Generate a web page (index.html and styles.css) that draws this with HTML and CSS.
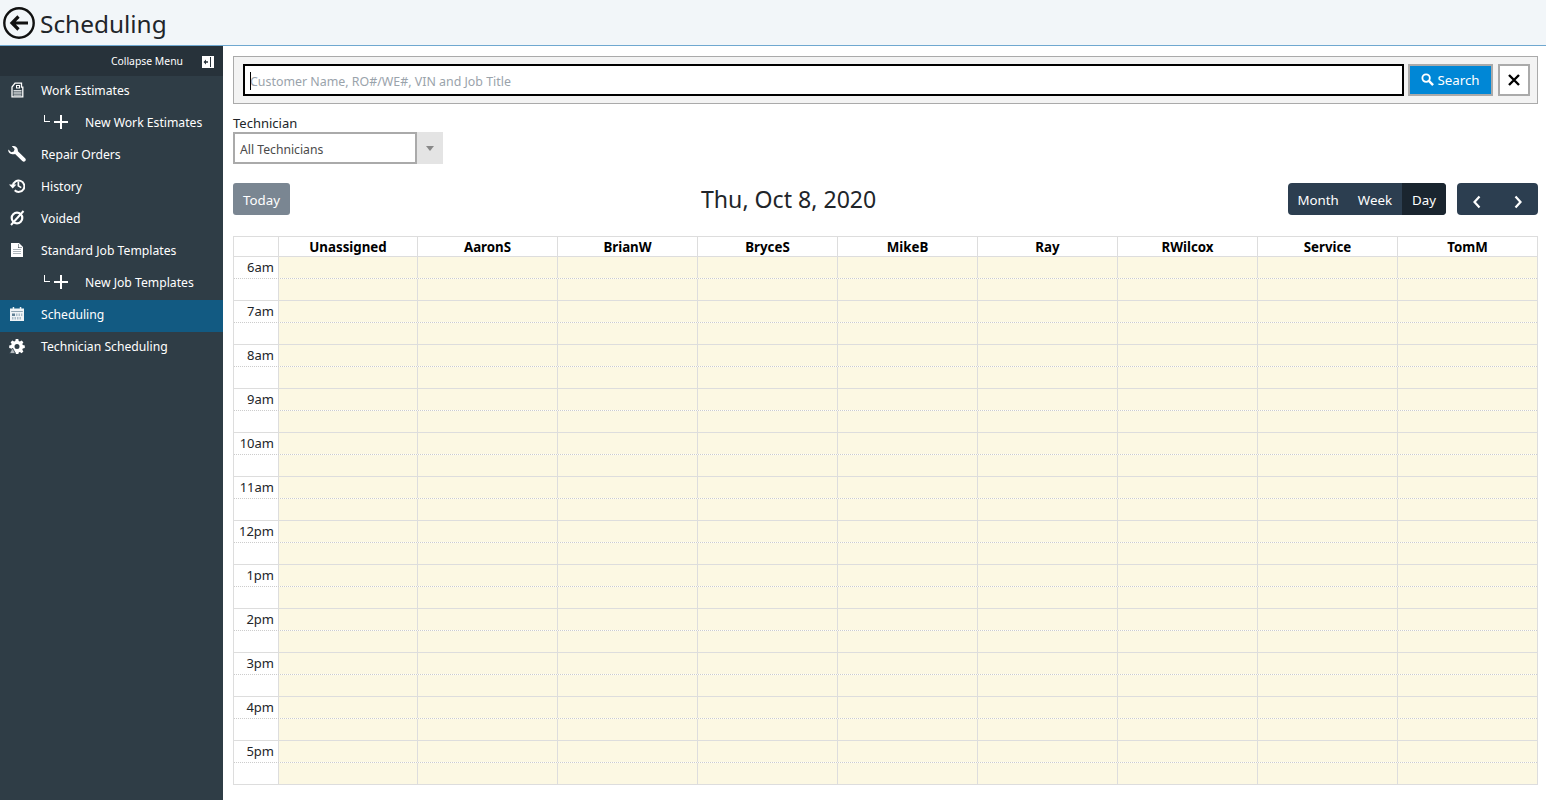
FILE: index.html
```html
<!DOCTYPE html>
<html lang="en">
<head>
<meta charset="utf-8">
<title>Scheduling</title>
<link rel="stylesheet" href="styles.css">
</head>
<body>
<header class="topbar">
  <svg class="back" viewBox="0 0 32 32" width="32" height="32"><circle cx="16" cy="16" r="14.7" fill="none" stroke="#111" stroke-width="2.4"/><path d="M25 16H9M15.5 9.500L9 16l6.500 6.500" fill="none" stroke="#111" stroke-width="3.200"/></svg>
  <h1>Scheduling</h1>
</header>
<div class="app">
  <nav class="sidebar">
    <div class="collapse"><span>Collapse Menu</span>
      <svg viewBox="0 0 12 12" width="12" height="12"><path fill="#fff" d="M0 0h12v12H0z"/><path fill="#27323a" d="M8 1h1v10H8z"/><path fill="#27323a" d="M1.500 6L4 3.500v1.700h2v1.600H4v1.700z"/></svg>
    </div>
    <a class="item"><svg class="ico" viewBox="0 0 16 16"><path fill="none" stroke="#fff" stroke-width="1.300" d="M6 1.200h6.500v4h1.300v9.600H3V5z"/><path fill="#d5d9dc" d="M4.500 8h8v1.500h-8zM4.500 10.300h8v1.500h-8zM4.500 12.500h8v1.300h-8z"/><path fill="#fff" d="M7 3h4v3.500H7z"/><path fill="#2f3d46" d="M8 4h2v1.500H8z"/></svg>Work Estimates</a>
    <a class="item sub"><span class="tree"></span><svg class="plus" viewBox="0 0 14 14"><path fill="#fff" d="M6 0h2v6h6v2H8v6H6V8H0V6h6z"/></svg>New Work Estimates</a>
    <a class="item"><svg class="ico wrench" viewBox="0 0 18 16"><path fill="#fff" d="M.4 3.400L3.200 6.200 5.800 5.600 6.600 3 3.800.3C7-.7 10.200 1.500 9.900 5.200l7.200 7.100c.9.900.9 2 .1 2.800-.8.800-2 .8-2.900-.1L7.100 8C3.600 9 -.5 7 .4 3.400z"/></svg>Repair Orders</a>
    <a class="item"><svg class="ico" viewBox="0 0 16 16"><path fill="none" stroke="#fff" stroke-width="2" d="M4 7.500a5.700 5.700 0 1 1 1.700 4.800"/><path fill="#fff" d="M0 6.500h7.500L3.700 10.500zM8.500 3.500h1.700v3.900l2.500 1.500-.9 1.300-3.300-2z"/></svg>History</a>
    <a class="item"><svg class="ico" viewBox="0 0 16 16"><circle cx="8" cy="8" r="5.300" fill="none" stroke="#fff" stroke-width="2.200"/><path stroke="#fff" stroke-width="2" d="M2 15L14.500 1"/></svg>Voided</a>
    <a class="item"><svg class="ico" viewBox="0 0 16 16"><path fill="#fff" d="M2 1h8l4 4v10H2z"/><path fill="#2f3d46" d="M9.500 2v3.500H13v.5H9V2z"/><path fill="#aeb6bb" d="M4 7h8v1H4zM4 9h8v1H4zM4 11h8v1H4z"/></svg>Standard Job Templates</a>
    <a class="item sub"><span class="tree"></span><svg class="plus" viewBox="0 0 14 14"><path fill="#fff" d="M6 0h2v6h6v2H8v6H6V8H0V6h6z"/></svg>New Job Templates</a>
    <a class="item active"><svg class="ico" viewBox="0 0 16 16"><path fill="#eef3f6" d="M1 2.500h2.700V1h1.500v1.500h5.600V1h1.500v1.500H15V15H1z"/><path fill="#8fa5b3" d="M2.200 5h11.600v1H2.200z"/><path fill="#5f7f94" d="M3 7.500h3v2.500H3z"/><path fill="#a9bcc8" d="M7 7.500h1.500V10H7zM9.500 7.500H11V10H9.500zM12 7.500h1.300V10H12zM3 11h1.500v2.500H3zM5.500 11H7v2.500H5.500zM8 11h1.500v2.500H8zM10.500 11H12v2.500h-1.500z"/></svg>Scheduling</a>
    <a class="item"><svg class="ico" viewBox="0 0 16 16"><path fill="#fff" fill-rule="evenodd" d="M6.700 1h2.600l.4 2 1.200.5 1.700-1.100 1.800 1.800-1.100 1.700.5 1.200 2 .4v2.600l-2 .4-.5 1.200 1.100 1.700-1.800 1.800-1.700-1.100-1.200.5-.4 1.900H6.700l-.4-1.900-1.200-.5-1.700 1.100-1.800-1.800 1.100-1.700-.5-1.200-2-.4V7.500l2-.4.5-1.200-1.100-1.700 1.800-1.800 1.700 1.100 1.200-.5zM8 6a2.500 2.500 0 1 0 0 5 2.500 2.500 0 0 0 0-5z"/><path fill="#b4bbc0" stroke="#2f3d46" stroke-width=".8" d="M.5 15.500L3.500 10l3 5.500z"/></svg>Technician Scheduling</a>
  </nav>
  <main class="content">
    <div class="searchbar">
      <div class="searchinput"><span class="caret"></span>Customer Name, RO#/WE#, VIN and Job Title</div>
      <button class="searchbtn"><svg viewBox="0 0 14 14" width="13" height="13"><circle cx="5.500" cy="5.500" r="4" fill="none" stroke="#fff" stroke-width="2"/><path stroke="#fff" stroke-width="2.600" d="M8.500 8.500L13 13"/></svg><span>Search</span></button>
      <button class="clearbtn"><svg viewBox="0 0 12 12" width="12" height="12"><path stroke="#000" stroke-width="2.400" d="M1 1l10 10M11 1L1 11"/></svg></button>
    </div>
    <label class="techlabel">Technician</label>
    <div class="select"><div class="selectval">All Technicians</div><div class="selectarrow"><span></span></div></div>
    <div class="toolbar">
      <button class="today">Today</button>
      <h2>Thu, Oct 8, 2020</h2>
      <div class="tools">
        <div class="group"><button>Month</button><button>Week</button><button class="on">Day</button></div>
        <div class="group nav">
          <button><svg viewBox="0 0 10 14" width="10" height="14"><path fill="none" stroke="#fff" stroke-width="2.200" d="M7.500 1.500L2.500 7l5 5.500"/></svg></button>
          <button><svg viewBox="0 0 10 14" width="10" height="14"><path fill="none" stroke="#fff" stroke-width="2.200" d="M2.500 1.500L7.500 7l-5 5.500"/></svg></button>
        </div>
      </div>
    </div>
    <div class="calendar">
      <div class="head"><div></div><div>Unassigned</div><div>AaronS</div><div>BrianW</div><div>BryceS</div><div>MikeB</div><div>Ray</div><div>RWilcox</div><div>Service</div><div>TomM</div></div>
      <div class="row"><div class="time">6am</div><div class="cells"></div></div>
      <div class="row half"><div class="time"></div><div class="cells"></div></div>
      <div class="row"><div class="time">7am</div><div class="cells"></div></div>
      <div class="row half"><div class="time"></div><div class="cells"></div></div>
      <div class="row"><div class="time">8am</div><div class="cells"></div></div>
      <div class="row half"><div class="time"></div><div class="cells"></div></div>
      <div class="row"><div class="time">9am</div><div class="cells"></div></div>
      <div class="row half"><div class="time"></div><div class="cells"></div></div>
      <div class="row"><div class="time">10am</div><div class="cells"></div></div>
      <div class="row half"><div class="time"></div><div class="cells"></div></div>
      <div class="row"><div class="time">11am</div><div class="cells"></div></div>
      <div class="row half"><div class="time"></div><div class="cells"></div></div>
      <div class="row"><div class="time">12pm</div><div class="cells"></div></div>
      <div class="row half"><div class="time"></div><div class="cells"></div></div>
      <div class="row"><div class="time">1pm</div><div class="cells"></div></div>
      <div class="row half"><div class="time"></div><div class="cells"></div></div>
      <div class="row"><div class="time">2pm</div><div class="cells"></div></div>
      <div class="row half"><div class="time"></div><div class="cells"></div></div>
      <div class="row"><div class="time">3pm</div><div class="cells"></div></div>
      <div class="row half"><div class="time"></div><div class="cells"></div></div>
      <div class="row"><div class="time">4pm</div><div class="cells"></div></div>
      <div class="row half"><div class="time"></div><div class="cells"></div></div>
      <div class="row"><div class="time">5pm</div><div class="cells"></div></div>
      <div class="row half"><div class="time"></div><div class="cells"></div></div>
    </div>
  </main>
</div>
</body>
</html>
```
FILE: styles.css
```css
* { box-sizing: border-box; }
html, body { height: 100%; }
body { margin: 0; font-family: "Noto Sans", "Open Sans", sans-serif; font-size: 13px; color: #212529; background: #fff; overflow: hidden; }
button { font-family: inherit; cursor: pointer; }

.topbar { height: 46px; background: #f2f6f9; border-bottom: 1px solid #6fa8d0; display: flex; align-items: center; padding-left: 3px; }
.back { flex: none; }
.topbar h1 { margin: 0 0 0 5px; font-size: 24.400px; font-weight: 400; color: #212529; line-height: 46px; padding-top: 3px; }

.app { display: flex; height: 754px; }
.sidebar { width: 223px; flex: none; background: #2f3d46; color: #fff; }
.collapse { height: 30px; background: #27323a; display: flex; align-items: center; justify-content: flex-end; padding: 0 9px 0 0; font-size: 10.400px; gap: 19px; }
.collapse svg { margin-top: 2px; }
.item { height: 32px; display: flex; align-items: center; color: #fff; font-size: 12.200px; padding-bottom: 4px; }
.item .ico { width: 16px; height: 16px; margin: 0 16px 0 9px; flex: none; }
.item .wrench { width: 18px; margin: 0 15px 0 8px; }
.item.active { background: #125a82; }
.sub { position: relative; padding-left: 54px; }
.sub .plus { width: 14px; height: 14px; margin-right: 17px; flex: none; }
.tree { position: absolute; left: 44px; top: 7px; width: 6px; height: 7px; border-left: 1px solid #fff; border-bottom: 1px solid #fff; }

.content { flex: 1; padding: 10px 8px 0 10px; min-width: 0; }
.searchbar { height: 48px; background: #f3f3f3; border: 1px solid #aaa; display: flex; align-items: center; padding: 0 7px 0 9px; }
.searchinput { flex: 1; height: 32px; background: #fff; border: 2px solid #000; color: #9aa3ab; font-size: 12.400px; line-height: 32px; padding-left: 5px; position: relative; }
.caret { position: absolute; left: 5px; top: 6px; width: 1px; height: 18px; background: #000; }
.searchbtn { width: 85px; height: 32px; margin-left: 4px; background: #0087d6; color: #fff; border: 2px solid #aaa; font-size: 13.300px; display: flex; align-items: center; justify-content: center; gap: 3px; padding: 0; }
.searchbtn svg { margin-bottom: 2px; }
.clearbtn { width: 32px; height: 32px; margin-left: 5px; background: #fff; border: 2px solid #aaa; display: flex; align-items: center; justify-content: center; padding: 0; }

.techlabel { display: block; margin-top: 10px; font-size: 13px; line-height: 18px; color: #212529; height: 18px; }
.select { display: flex; width: 210px; height: 32px; }
.selectval { width: 184px; border: 2px solid #aaa; background: #fff; font-size: 12.200px; line-height: 31px; padding-left: 5px; color: #4a4a4a; }
.selectarrow { flex: 1; background: #e4e4e4; display: flex; align-items: center; justify-content: center; }
.selectarrow span { width: 0; height: 0; border: 4.500px solid transparent; border-top: 5px solid #888; border-bottom: 0; }

.toolbar { display: flex; align-items: center; justify-content: space-between; margin-top: 19px; height: 32px; position: relative; }
.today { width: 57px; height: 32px; background: #7a8692; border: 0; border-radius: 3px; color: #fff; font-size: 13.300px; padding: 2px 0 0; }
.toolbar h2 { margin: 0; font-size: 23.100px; font-weight: 400; color: #212529; position: absolute; left: 468px; top: 0; line-height: 32px; }
.tools { display: flex; gap: 11px; }
.group { display: flex; background: #2c3e50; border-radius: 4px; overflow: hidden; height: 32px; }
.group button { background: transparent; border: 0; color: #fff; font-size: 13.300px; padding: 2px 10px 0; height: 32px; }
.group button.on { background: #1a252f; }
.group button:first-child { padding-right: 9px; }
.group.nav button { width: 40.500px; padding: 6px 0 0; display: flex; align-items: center; justify-content: center; }

.calendar { margin-top: 21px; width: 1305px; border: 1px solid #ddd; }
.head { display: grid; grid-template-columns: 45px 139px repeat(7, 140px) 1fr; height: 20px; border-bottom: 1px solid #ddd; font-size: 13.300px; font-weight: 700; color: #000; text-align: center; line-height: 20px; }
.head > div { border-right: 1px solid #ddd; }
.head > div:last-child { border-right: 0; }
.row { display: flex; height: 22px; border-bottom: 1px dotted #ccc; }
.row.half { border-bottom: 1px solid #ddd; }
.row:last-child { border-bottom: 0; height: 21px; }
.time { width: 45px; flex: none; border-right: 1px solid #ddd; text-align: right; padding-right: 4px; font-size: 13px; line-height: 20px; color: #212529; }
.cells { flex: 1; background-color: #fcf8e3; background-image: linear-gradient(to right, transparent 139px, #ddd 139px); background-size: 140px 100%; background-position: -1px 0; }
```
